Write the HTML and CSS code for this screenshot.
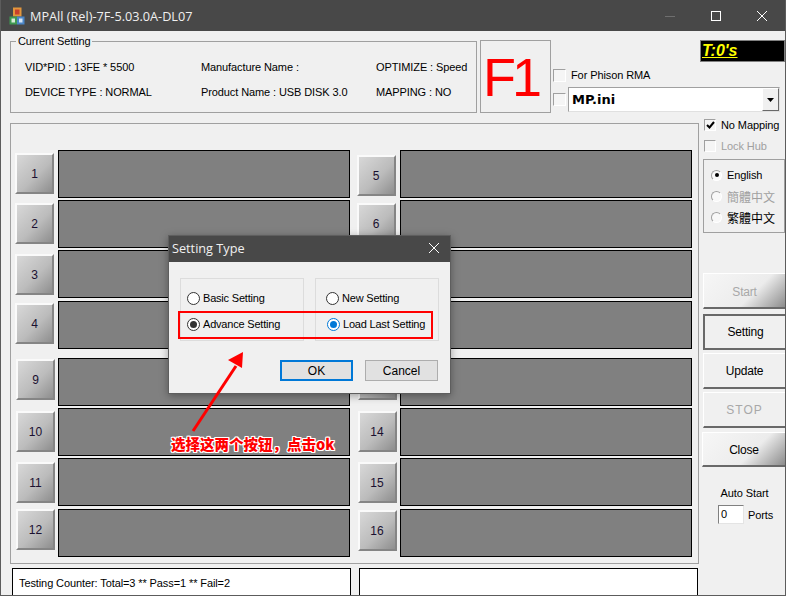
FILE: index.html
```html
<!DOCTYPE html>
<html lang="en">
<head>
    <meta charset="UTF-8">
    <meta name="viewport" content="width=device-width, initial-scale=1.0">
    <title>MPAll</title>
    <link rel="stylesheet" href="styles.css">
</head>
<body>
    <div class="window">
        <div class="titlebar">
            <svg class="app-icon" width="16" height="18" viewBox="0 0 16 18">
                <rect x="4" y="0.5" width="8.5" height="9" fill="#e2963c"/>
                <rect x="6" y="2.5" width="4.5" height="5" fill="#c8402c"/>
                <rect x="0.5" y="9.5" width="7.5" height="8" fill="#3f9a52"/>
                <rect x="8" y="9.5" width="7.5" height="8" fill="#4a86c8"/>
                <rect x="2.5" y="11.5" width="3.5" height="4" fill="#d8ecd8"/>
                <rect x="10" y="11.5" width="3.5" height="4" fill="#d4e4f4"/>
            </svg>
            <span class="title-text">MPAll (Rel)-7F-5.03.0A-DL07</span>
            <div class="win-buttons">
                <svg width="12" height="12" viewBox="0 0 12 12"><path d="M1 6.5H11" stroke="#6f6f6f"/></svg>
                <svg width="12" height="12" viewBox="0 0 12 12"><rect x="1.5" y="1.5" width="9" height="9" fill="none" stroke="#fff"/></svg>
                <svg width="12" height="12" viewBox="0 0 12 12"><path d="M1 1L11 11M11 1L1 11" stroke="#fff"/></svg>
            </div>
        </div>

        <div class="content">
            <div class="top-row">
                <div class="current">
                    <span class="legend">Current Setting</span>
                    <div class="current-grid">
                        <span>VID*PID : 13FE * 5500</span>
                        <span>Manufacture Name :</span>
                        <span>OPTIMIZE : Speed</span>
                        <span>DEVICE TYPE : NORMAL</span>
                        <span>Product Name : USB DISK 3.0</span>
                        <span>MAPPING : NO</span>
                    </div>
                </div>
                <div class="f1-box">F1</div>
                <div class="rma">
                    <label class="check rma-check"><i class="box"></i>For Phison RMA</label>
                    <div class="ini-row">
                        <i class="box"></i>
                        <div class="combo">
                            <span>MP.ini</span>
                            <b class="combo-btn"><svg width="7" height="4" viewBox="0 0 7 4"><path d="M0 0H7L3.5 4Z" fill="#000"/></svg></b>
                        </div>
                    </div>
                </div>
                <div class="timer"><span>T:0's</span></div>
            </div>

            <div class="middle">
                <div class="slots">
                    <div class="slot-col">
                        <div class="slot-group">
                            <div class="slot"><button class="num">1</button><div class="panel"></div></div>
                            <div class="slot"><button class="num">2</button><div class="panel"></div></div>
                            <div class="slot"><button class="num">3</button><div class="panel"></div></div>
                            <div class="slot"><button class="num">4</button><div class="panel"></div></div>
                        </div>
                        <div class="slot-group">
                            <div class="slot"><button class="num">9</button><div class="panel"></div></div>
                            <div class="slot"><button class="num">10</button><div class="panel"></div></div>
                            <div class="slot"><button class="num">11</button><div class="panel"></div></div>
                            <div class="slot"><button class="num">12</button><div class="panel"></div></div>
                        </div>
                    </div>
                    <div class="slot-col slot-col-right">
                        <div class="slot-group">
                            <div class="slot"><button class="num">5</button><div class="panel"></div></div>
                            <div class="slot"><button class="num">6</button><div class="panel"></div></div>
                            <!-- 7, 8 and 13 sit behind the dialog -->
                            <div class="slot"><button class="num"></button><div class="panel"></div></div>
                            <div class="slot"><button class="num"></button><div class="panel"></div></div>
                        </div>
                        <div class="slot-group">
                            <div class="slot"><button class="num"></button><div class="panel"></div></div>
                            <div class="slot"><button class="num">14</button><div class="panel"></div></div>
                            <div class="slot"><button class="num">15</button><div class="panel"></div></div>
                            <div class="slot"><button class="num">16</button><div class="panel"></div></div>
                        </div>
                    </div>
                </div>

                <div class="side">
                    <label class="check"><i class="box checked"><svg width="9" height="8" viewBox="0 0 9 8"><path d="M1 4L3.5 6.5L8 1" fill="none" stroke="#000" stroke-width="2"/></svg></i>No Mapping</label>
                    <label class="check disabled"><i class="box"></i>Lock Hub</label>
                    <div class="lang">
                        <label class="lang-item"><i class="dot on"></i>English</label>
                        <label class="lang-item lang-cjk disabled"><i class="dot"></i>簡體中文</label>
                        <label class="lang-item lang-cjk"><i class="dot"></i>繁體中文</label>
                    </div>
                    <div class="actions">
                        <button class="act shiny disabled start">Start</button>
                        <button class="act focus">Setting</button>
                        <button class="act">Update</button>
                        <button class="act disabled stop">STOP</button>
                        <button class="act shiny close">Close</button>
                    </div>
                    <div class="auto-start">
                        <div>Auto Start</div>
                        <div class="ports"><span class="port-input">0</span>Ports</div>
                    </div>
                </div>
            </div>

            <div class="counters">
                <div class="counter">Testing Counter: Total=3 ** Pass=1 ** Fail=2</div>
                <div class="counter"></div>
            </div>
        </div>
    </div>

    <div class="dialog">
        <div class="dialog-title">
            <span>Setting Type</span>
            <svg width="12" height="12" viewBox="0 0 12 12"><path d="M1 1L11 11M11 1L1 11" stroke="#fff"/></svg>
        </div>
        <div class="dialog-body">
            <div class="dialog-groups">
                <div class="dialog-group">
                    <label class="opt"><i class="opt-dot"></i>Basic Setting</label>
                    <label class="opt"><i class="opt-dot dark"></i>Advance Setting</label>
                </div>
                <div class="dialog-group group-right">
                    <label class="opt"><i class="opt-dot"></i>New Setting</label>
                    <label class="opt opt-load"><i class="opt-dot blue"></i>Load Last Setting</label>
                </div>
            </div>
            <div class="dialog-actions">
                <button class="dlg-btn default">OK</button>
                <button class="dlg-btn">Cancel</button>
            </div>
        </div>
    </div>

    <!-- annotation on top of the screenshot -->
    <div class="mark"></div>
    <svg class="arrow" width="70" height="90" viewBox="0 0 70 90">
        <path d="M3 84L46 19" stroke="#f00" stroke-width="3" fill="none"/>
        <path d="M53 5L52 21L38 13Z" fill="#f00"/>
    </svg>
    <div class="note">选择这两个按钮，点击ok</div>
</body>
</html>
```

FILE: styles.css
```css
* {
    box-sizing: border-box;
}
html, body {
    margin: 0;
    padding: 0;
}
body {
    position: relative;
    width: 786px;
    height: 596px;
    overflow: hidden;
    font-family: "Liberation Sans", Arial, "Noto Sans CJK TC", sans-serif;
    font-size: 11px;
    letter-spacing: -0.1px;
    color: #000;
    background: #f0f0f0;
}
.window {
    width: 786px;
    height: 596px;
    border: 1px solid #5c5c5c;
    border-top: 0;
    overflow: hidden;
    display: flex;
    flex-direction: column;
}
.titlebar {
    height: 31px;
    flex: none;
    margin: 0 -1px;
    background: #484848;
    display: flex;
    align-items: center;
    padding-left: 9px;
    color: #fff;
}
.title-text {
    margin-left: 5px;
    font-family: "Open Sans", sans-serif;
    font-size: 12.7px;
    letter-spacing: 0;
    color: #f0f0f0;
}
.win-buttons {
    margin-left: auto;
    display: flex;
    gap: 34px;
    padding-right: 18px;
}
.content {
    flex: 1;
    padding: 5px 0 0 9px;
}
.top-row {
    display: flex;
    height: 81px;
}
.current {
    position: relative;
    width: 467px;
    height: 72px;
    margin-top: 5px;
    border: 1px solid #a0a0a0;
}
.legend {
    position: absolute;
    top: -7px;
    left: 5px;
    padding: 0 2px;
    background: #f0f0f0;
    line-height: 13px;
}
.current-grid {
    display: grid;
    grid-template-columns: 176px 175px auto;
    grid-auto-rows: 25px;
    padding: 13px 0 0 14px;
    line-height: 25px;
    white-space: nowrap;
}
.f1-box {
    width: 71px;
    height: 73px;
    margin: 4px 0 0 3px;
    padding-left: 2px;
    border: 1px solid #a0a0a0;
    color: #f00;
    font-size: 54px;
    letter-spacing: -4px;
    line-height: 72px;
}
.rma {
    width: 229px;
    padding: 32px 0 0 2px;
}
.check {
    display: flex;
    align-items: center;
    height: 14px;
    white-space: nowrap;
}
.check.disabled, .lang-item.disabled {
    color: #a0a0a0;
}
.rma-check {
    margin-bottom: 5px;
}
.box {
    display: inline-flex;
    align-items: center;
    justify-content: center;
    width: 13px;
    height: 13px;
    margin-right: 5px;
    flex: none;
    background: #f5f5f5;
    border: 1px solid #a0a0a0;
    border-right-color: #fff;
    border-bottom-color: #fff;
}
.ini-row {
    display: flex;
    align-items: center;
}
.ini-row .box {
    margin-right: 2px;
}
.combo {
    width: 213px;
    height: 25px;
    background: #fff;
    border: 1px solid #a0a0a0;
    border-right-color: #e0e0e0;
    border-bottom-color: #e0e0e0;
    display: flex;
    align-items: center;
    padding-left: 3px;
    font-weight: bold;
    font-size: 13px;
    letter-spacing: 0;
    font-family: "DejaVu Sans", sans-serif;
}
.combo span {
    flex: 1;
}
.combo-btn {
    width: 17px;
    height: 23px;
    display: flex;
    align-items: center;
    justify-content: center;
    background: #f0f0f0;
    border: 1px solid #fff;
    border-right-color: #696969;
    border-bottom-color: #696969;
}
.timer {
    width: 85px;
    height: 22px;
    margin: 4px 0 0 -80px;
    position: relative;
    background: #000;
    border: 1px solid #808080;
    padding-left: 1px;
}
.timer span {
    color: #ff0;
    font-weight: bold;
    font-style: italic;
    font-size: 16px;
    letter-spacing: 0;
    line-height: 19px;
    text-decoration: underline;
}
.middle {
    display: flex;
    margin-top: 6px;
}
.slots {
    position: relative;
    width: 689px;
    height: 441px;
    border: 1px solid #a0a0a0;
    padding: 26px 0 0 4px;
    display: flex;
}
.slot-col {
    width: 342px;
}
.slot-group {
    display: flex;
    flex-direction: column;
    gap: 2px;
    margin-bottom: 9px;
}
.slot {
    display: flex;
    align-items: flex-start;
    gap: 4px;
    height: 48px;
}
.slot:last-child {
    margin-top: 1px;
}
.panel {
    width: 292px;
    height: 48px;
    background: #808080;
    border: 1px solid #000;
}
.num {
    width: 39px;
    height: 41px;
    margin-top: 3px;
    padding: 0;
    font: inherit;
    font-size: 12px;
    color: #1a1030;
    background: linear-gradient(135deg, #d8d8d8 0%, #bcbcbc 55%, #8e8e8e 100%);
    border: 2px solid #fafafa;
    border-right-color: #858585;
    border-bottom-color: #858585;
}
.slot:nth-child(3) .num {
    margin-top: 4px;
}
.slot:last-child .num {
    margin-top: 2px;
}
.slot-group + .slot-group .num {
    margin-left: 1px;
    margin-right: -1px;
}
.slot-group + .slot-group .slot:first-child .num {
    margin-top: 1px;
}
.slot-group + .slot-group .slot:last-child .num {
    margin-top: 0;
}
.slot-col-right .slot-group + .slot-group .slot:last-child .num {
    margin-top: 1px;
}
.slot-col-right .slot-group:first-child .slot:first-child .num {
    margin-top: 5px;
}
.side {
    width: 84px;
    margin-left: 4px;
    margin-top: -5px;
    display: flex;
    flex-direction: column;
    align-items: stretch;
}
.side .check {
    height: 14px;
    margin: 0 0 7px 1px;
}
.side .box {
    width: 12px;
    height: 12px;
    margin-right: 5px;
}
.lang {
    width: 82px;
    height: 74px;
    margin: -1px 0 0 0;
    border: 1px solid #a0a0a0;
    padding: 8px 0 0 7px;
    display: flex;
    flex-direction: column;
    gap: 7px;
}
.lang-item {
    display: flex;
    align-items: center;
    height: 14px;
}
.lang-cjk {
    font-size: 12px;
    letter-spacing: 0;
}
.dot {
    width: 11px;
    height: 11px;
    margin-right: 5px;
    border-radius: 50%;
    background: #f8f8f8;
    border: 1px solid #a0a0a0;
    border-right-color: #fff;
    border-bottom-color: #fff;
    position: relative;
    flex: none;
}
.dot.on::after {
    content: "";
    position: absolute;
    left: 2.5px;
    top: 2.5px;
    width: 4px;
    height: 4px;
    border-radius: 50%;
    background: #000;
}
.actions {
    display: flex;
    flex-direction: column;
    gap: 3px;
    margin: 40px 0 0 0;
}
.act {
    width: 83px;
    height: 36px;
    padding: 0;
    font: inherit;
    font-size: 12px;
    letter-spacing: -0.2px;
    color: #000;
    background: #f0f0f0;
    border: 1px solid #fff;
    border-right-color: #808080;
    border-bottom-color: #696969;
    border-bottom-width: 2px;
}
.act.shiny {
    padding-top: 2px;
    background: linear-gradient(135deg, #f6f6f6 0%, #ececec 60%, #8c8c8c 100%);
}
.act.focus {
    border: 2px solid #696969;
    border-right-width: 0;
}
.act.disabled {
    color: #a8a8a8;
}
.start {
    margin-bottom: 2px;
}
.stop {
    letter-spacing: 1px;
}
.close {
    width: 84px;
    height: 35px;
    margin: 1px 0 0 -1px;
}
.auto-start {
    margin-top: 18px;
    text-align: center;
    line-height: 16px;
}
.ports {
    display: flex;
    align-items: center;
    margin: 4px 0 0 15px;
    gap: 4px;
}
.port-input {
    width: 26px;
    height: 19px;
    padding-left: 2px;
    background: #fff;
    border: 1px solid #808080;
    border-right-color: #e4e4e4;
    border-bottom-color: #e4e4e4;
    text-align: left;
}
.counters {
    display: flex;
    gap: 8px;
    margin: 4px 0 0 2px;
}
.counter {
    width: 339px;
    height: 29px;
    padding: 8px 0 0 6px;
    background: #fff;
    border: 1px solid #000;
}

/* dialog */
.dialog {
    position: absolute;
    left: 168px;
    top: 235px;
    width: 283px;
    height: 159px;
    border: 1px solid #5e5e5e;
    box-shadow: 0 2px 8px rgba(0,0,0,0.35);
    background: #f0f0f0;
}
.dialog-title {
    height: 26px;
    background: #484848;
    color: #f0f0f0;
    display: flex;
    align-items: center;
    justify-content: space-between;
    padding: 0 10px 3px 3px;
    font-family: "Open Sans", sans-serif;
    font-size: 12.7px;
    letter-spacing: 0;
}
.dialog-body {
    padding: 16px 11px 0 11px;
    letter-spacing: -0.2px;
}
.dialog-groups {
    display: flex;
    gap: 11px;
}
.dialog-group {
    width: 125px;
    height: 63px;
    border: 1px solid #dcdcdc;
    padding: 6px 0 0 6px;
}
.group-right {
    padding-left: 10px;
}
.opt {
    display: flex;
    align-items: center;
    height: 26px;
    white-space: nowrap;
}
.opt-load {
    margin-left: 1px;
}
.opt-dot {
    width: 13px;
    height: 13px;
    margin-right: 3px;
    border-radius: 50%;
    background: #fff;
    border: 1px solid #333;
    position: relative;
    flex: none;
}
.opt-dot.dark::after, .opt-dot.blue::after {
    content: "";
    position: absolute;
    left: 2px;
    top: 2px;
    width: 7px;
    height: 7px;
    border-radius: 50%;
    background: #333;
}
.opt-dot.blue {
    border-color: #0078d7;
}
.opt-dot.blue::after {
    background: #0078d7;
}
.dialog-actions {
    display: flex;
    gap: 12px;
    justify-content: flex-end;
    margin-top: 19px;
    padding-right: 1px;
}
.dlg-btn {
    width: 73px;
    height: 21px;
    padding: 0;
    font: inherit;
    font-size: 12px;
    letter-spacing: 0;
    color: #000;
    background: #e1e1e1;
    border: 1px solid #adadad;
}
.dlg-btn.default {
    border: 2px solid #0078d7;
}

/* annotation */
.mark {
    position: absolute;
    left: 178px;
    top: 311px;
    width: 255px;
    height: 28px;
    border: 2px solid #f00;
}
.arrow {
    position: absolute;
    left: 190px;
    top: 347px;
}
.note {
    position: absolute;
    left: 171px;
    top: 435px;
    font-family: "Noto Sans CJK SC", sans-serif;
    font-size: 14.5px;
    line-height: 18px;
    font-weight: 900;
    letter-spacing: 0;
    color: #f00;
    text-shadow: -1px -1px 0 #fff, 1px -1px 0 #fff, -1px 1px 0 #fff, 1px 1px 0 #fff, 0 1px 0 #fff, 0 -1px 0 #fff, 1px 0 0 #fff, -1px 0 0 #fff;
}
```
